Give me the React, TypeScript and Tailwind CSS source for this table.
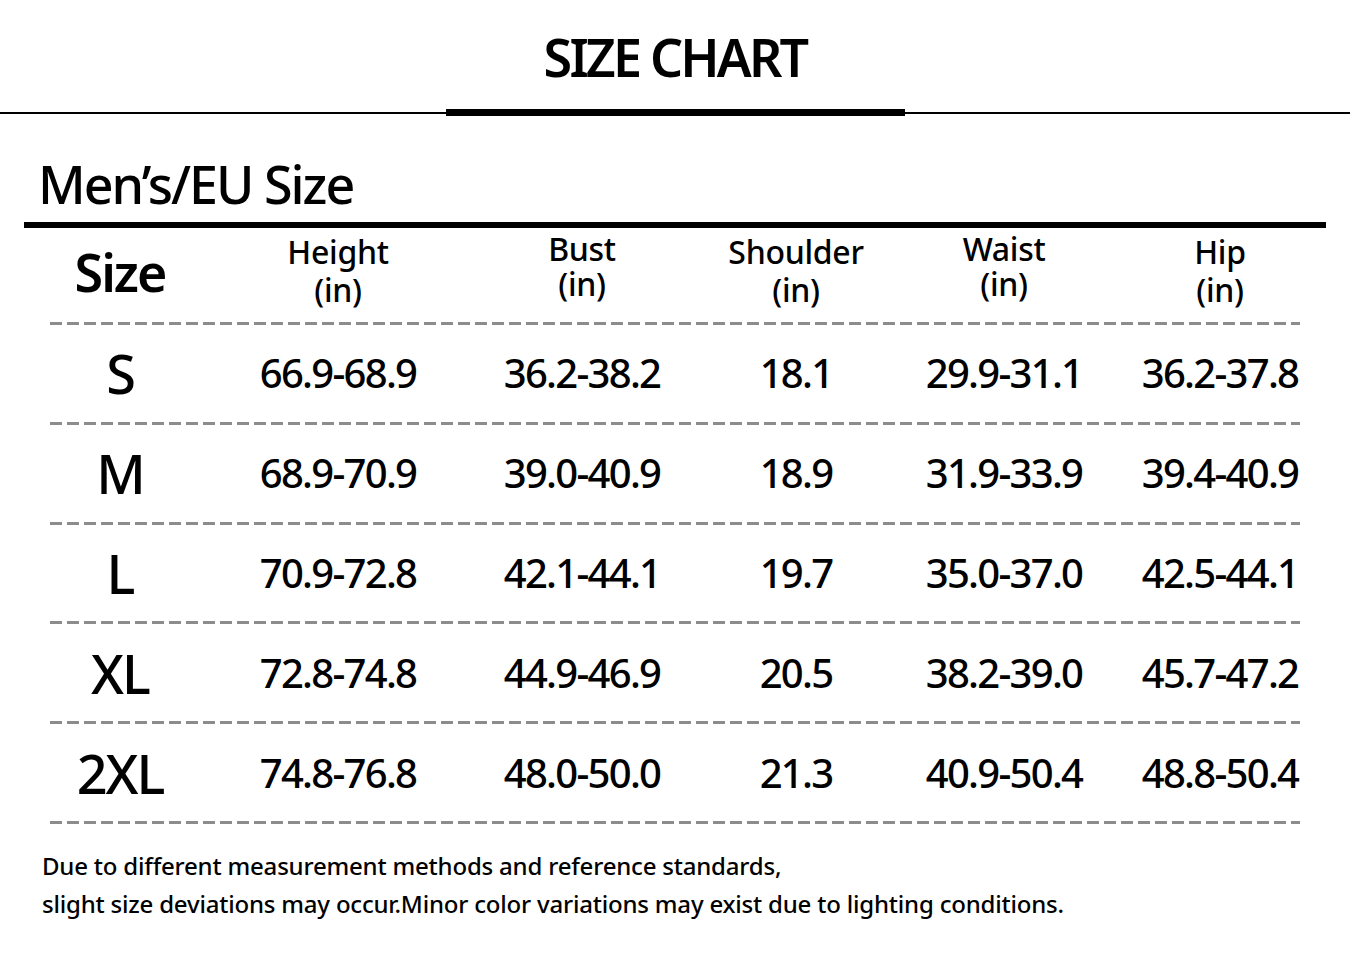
import React from 'react';

const headers = [
  { top: 'Height', cls: 'mt-[5px] leading-[38px]' },
  { top: 'Bust', cls: 'mt-[3px] leading-[35px]' },
  { top: 'Shoulder', cls: 'mt-[5px] leading-[38px]' },
  { top: 'Waist', cls: 'mt-[3px] leading-[35px]' },
  { top: 'Hip', cls: 'mt-[5px] leading-[38px]' },
];

const rows = [
  { size: 'S', values: ['66.9-68.9', '36.2-38.2', '18.1', '29.9-31.1', '36.2-37.8'] },
  { size: 'M', values: ['68.9-70.9', '39.0-40.9', '18.9', '31.9-33.9', '39.4-40.9'] },
  { size: 'L', values: ['70.9-72.8', '42.1-44.1', '19.7', '35.0-37.0', '42.5-44.1'] },
  { size: 'XL', values: ['72.8-74.8', '44.9-46.9', '20.5', '38.2-39.0', '45.7-47.2'] },
  { size: '2XL', values: ['74.8-76.8', '48.0-50.0', '21.3', '40.9-50.4', '48.8-50.4'] },
];

const cols = 'grid grid-cols-[200px_236px_252px_176px_240px_192px] pl-[20px]';

function Dashed() {
  return (
    <div className="ml-[50px] w-[1250px] h-[3px] bg-[linear-gradient(to_right,#8c8c8c_12px,transparent_12px)] bg-[length:17px_3px]" />
  );
}

export default function App() {
  return (
    <div className="w-[1350px] h-[962px] bg-white text-black font-['Noto_Sans','Open_Sans',sans-serif] overflow-hidden">
      <div className="pt-[31px] text-center text-[52px] font-semibold leading-none tracking-[-2.8px]">SIZE CHART</div>

      <div className="mt-[26px] flex items-center">
        <div className="h-[2px] flex-1 bg-black" />
        <div className="h-[7px] w-[459px] bg-black" />
        <div className="h-[2px] flex-1 bg-black" />
      </div>

      <div className="mt-[42px] pl-[38px] text-[52px] font-medium leading-none tracking-[-2px]">Men’s/EU Size</div>

      <div className="mt-[12px] mx-[24px] h-[6px] bg-black" />

      <div className={`${cols} h-[94px] items-start`}>
        <div className="mt-[18px] text-center text-[52px] font-semibold leading-none tracking-[-2px]">Size</div>
        {headers.map((h) => (
          <div key={h.top} className={`text-center text-[32px] font-medium tracking-[-0.3px] ${h.cls}`}>
            <div>{h.top}</div>
            <div>(in)</div>
          </div>
        ))}
      </div>
      <Dashed />

      {rows.map((r) => (
        <div key={r.size}>
          <div className={`${cols} h-[96.8px] items-center`}>
            <div className="text-center text-[54px] font-medium leading-none tracking-[-2px]">{r.size}</div>
            {r.values.map((v, i) => (
              <div key={i} className="text-center text-[40px] font-medium leading-none tracking-[-1.7px]">
                {v}
              </div>
            ))}
          </div>
          <Dashed />
        </div>
      ))}

      <div className="mt-[23px] pl-[42px] text-[24px] font-medium leading-[38px] tracking-[-0.2px]">
        <div>Due to different measurement methods and reference standards,</div>
        <div>slight size deviations may occur.Minor color variations may exist due to lighting conditions.</div>
      </div>
    </div>
  );
}
